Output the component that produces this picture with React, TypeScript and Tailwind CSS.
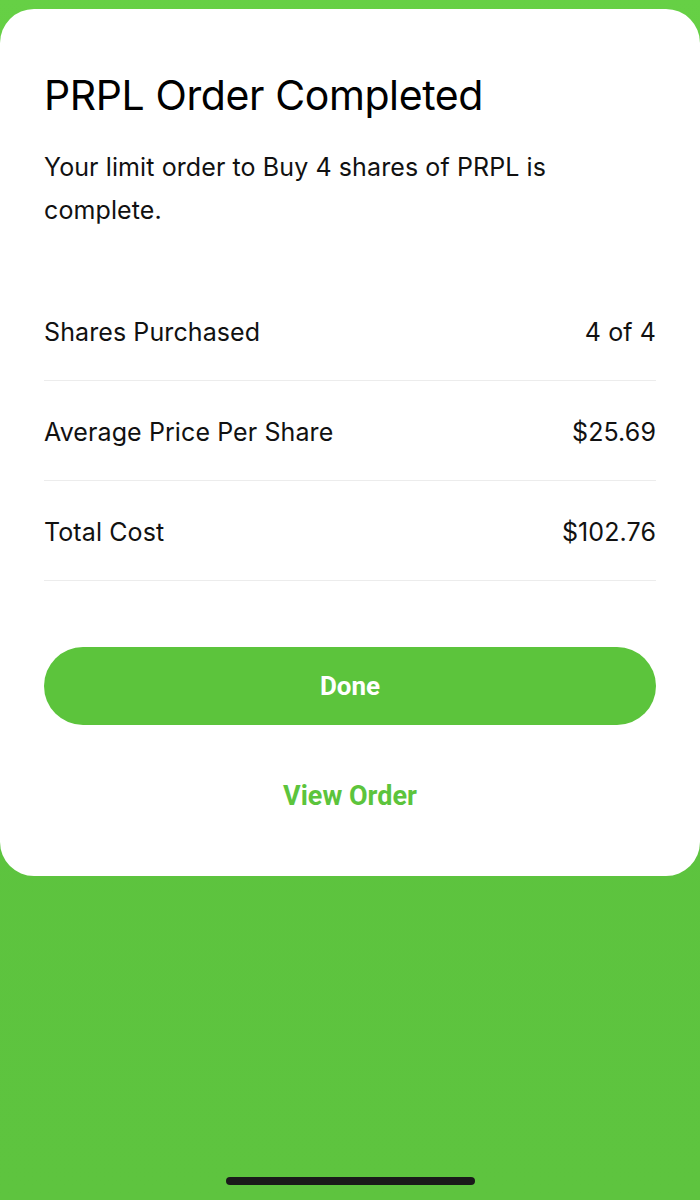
import React from 'react';

const rows = [
  { label: 'Shares Purchased', value: '4 of 4' },
  { label: 'Average Price Per Share', value: '$25.69' },
  { label: 'Total Cost', value: '$102.76' },
];

export default function App() {
  return (
    <div
      className="w-[700px] h-[1200px] flex flex-col bg-gradient-to-b from-[#66d045] via-[#5cc33e] to-[#5ec43f] pt-[9px]"
      style={{ fontFamily: 'Inter, "Noto Sans", sans-serif' }}
    >
      <div className="bg-white rounded-[34px] px-[44px] pt-[62px] h-[867px] flex flex-col">
        <h1 className="text-[41px] leading-[48px] text-black tracking-[-0.4px]">PRPL Order Completed</h1>
        <p className="mt-[27px] text-[25px] leading-[43px] text-[#111] pr-[80px] tracking-[0.1px]">
          Your limit order to Buy 4 shares of PRPL is complete.
        </p>
        <div className="mt-[49px] flex flex-col">
          {rows.map((r) => (
            <div
              key={r.label}
              className="h-[100px] pt-[4px] flex items-center justify-between border-b border-[#ececec] text-[25px] text-[#111] tracking-[0.1px]"
            >
              <span>{r.label}</span>
              <span>{r.value}</span>
            </div>
          ))}
        </div>
        <button
          className="mt-[66px] h-[78px] w-full rounded-full bg-[#5cc43c] text-white text-[26px] font-bold"
          style={{ fontFamily: 'Roboto, Inter, sans-serif' }}
        >
          Done
        </button>
        <button
          className="mt-[55px] self-center text-[#5cc43c] text-[27px] leading-[32px] font-bold"
          style={{ fontFamily: 'Roboto, Inter, sans-serif' }}
        >
          View Order
        </button>
      </div>
      <div className="flex-1 flex items-end justify-center pb-[15px]">
        <div className="w-[249px] h-[8px] rounded-full bg-[#1a1a1a]" />
      </div>
    </div>
  );
}
